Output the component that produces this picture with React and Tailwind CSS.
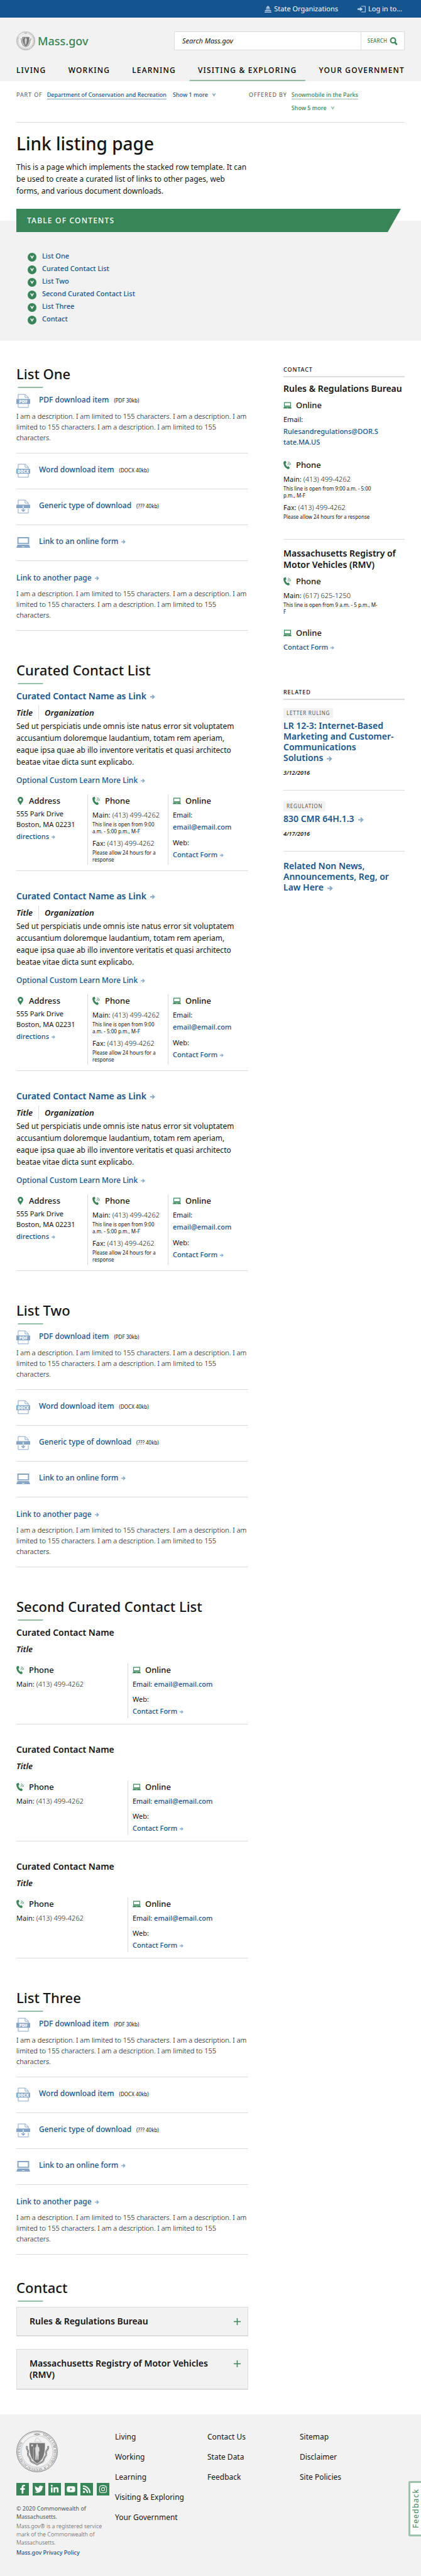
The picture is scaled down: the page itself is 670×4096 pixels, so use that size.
import React from "react";
import { FaFacebookF, FaTwitter, FaLinkedinIn, FaYoutube, FaRss, FaInstagram } from "react-icons/fa";

const LINK = "text-[#14558f] hover:underline";

function Arrow({ className = "ml-[5px] h-[7px] w-[7px]" }) {
  return (
    <svg viewBox="0 0 14 14" className={`inline-block text-[#89aac7] ${className}`} aria-hidden="true">
      <path d="M0 5.4h7.6L4.9 2.6 7 .6 13.6 7 7 13.4l-2.1-2 2.7-2.8H0z" fill="currentColor" />
    </svg>
  );
}

function Chevron({ className }) {
  return (
    <svg viewBox="0 0 12 12" className={className} aria-hidden="true">
      <path d="M0 1.4 2.8.6 6 5.2 9.2.6l2.8.8L6 11.6z" fill="currentColor" />
    </svg>
  );
}

function Laptop({ className }) {
  return (
    <svg viewBox="0 0 34 26" className={className} aria-hidden="true">
      <path fillRule="evenodd" fill="currentColor" d="M2.5 0h29v17h-29zM5.5 3v11h23V3z" />
      <path fillRule="evenodd" fill="currentColor" d="M2.8 18.5h28.4L34 26H0zM14 23.2v1.4h6v-1.4z" />
    </svg>
  );
}

function PhoneIcon({ className }) {
  return (
    <svg viewBox="0 0 22 24" className={className} aria-hidden="true">
      <path
        fill="currentColor"
        d="M3 .8 6 .1c.6 0 1 .2 1.2.7l1.3 4.4c.1.6 0 1-.5 1.3L5.9 8c.9 3.6 3 6.8 5.7 9l2.2-1.3c.5-.3 1-.2 1.4.2l3 3.4c.4.5.4 1 0 1.4l-2 2.4c-.5.6-1.2.9-2 .8C6.5 22.3.1 14 .1 4.8.1 2.7 1 1.3 3 .8z"
      />
      <path
        fill="none"
        stroke="currentColor"
        strokeWidth="1.7"
        d="M12.2 9.7c1.2.3 1.9 1.1 2 2.4M13 6.2c2.8.5 4.6 2.5 4.8 5.6M13.9 2.6c4.2.7 7 4 7.2 8.6"
      />
    </svg>
  );
}

function Pin({ className }) {
  return (
    <svg viewBox="0 0 14 20" className={className} aria-hidden="true">
      <path
        fillRule="evenodd"
        fill="currentColor"
        d="M7 0a7 7 0 0 1 7 7c0 4.500-4 8-7 13C4 15 0 11.500 0 7a7 7 0 0 1 7-7zm0 4.200a2.900 2.900 0 1 0 0 5.800 2.900 2.900 0 0 0 0-5.800z"
      />
    </svg>
  );
}

function FileIcon({ label }) {
  return (
    <svg viewBox="0 0 34 34" className="h-[23px] w-[22px]" aria-hidden="true">
      <g fill="none" stroke="#85a6c7" strokeWidth="1.5">
        <path d="M4.5 13V1h17.7l7.3 7v5M4.5 22v11h25V22" />
        <path d="M21.5 1v7.500h8" />
      </g>
      <rect x="0" y="12.3" width="34" height={label ? 12 : 8.5} fill="#85a6c7" />
      {label ? (
        <text
          x="17"
          y="21.8"
          textAnchor="middle"
          fill="#fff"
          fontFamily="'Noto Sans', sans-serif"
          fontWeight="900"
          fontSize={label === "PDF" ? 11 : 9.5}
        >
          {label}
        </text>
      ) : (
        <>
          <path d="M17 14.5v12" stroke="#fff" strokeWidth="2" />
          <path d="M17 21v7M12.5 24.500l4.500 4.200 4.500-4.200" fill="none" stroke="#85a6c7" strokeWidth="2.2" />
        </>
      )}
    </svg>
  );
}

function Seal({ className, id }) {
  return (
    <svg viewBox="0 0 100 100" className={className} role="img" aria-label="Massachusetts State Seal">
      <g fill="none" stroke="#787878">
        <circle cx="50" cy="50" r="49.2" strokeWidth="1.4" />
        <circle cx="50" cy="50" r="46.8" strokeWidth=".7" />
        <circle cx="50" cy="50" r="38" strokeWidth="1" strokeDasharray="1 .7" />
      </g>
      <defs>
        <path id={id} d="M55 9.8A40.5 40.5 0 1 1 45 9.8" />
      </defs>
      <text fontFamily="'Liberation Serif', serif" fontSize="9" fill="#787878">
        <textPath href={`#${id}`} startOffset="8">
          SIGILLUM REIPUBLICÆ MASSACHUSETTENSIS
        </textPath>
      </text>
      <path d="M41 8.5l7-1.500v3zM59 8.500l-7-1.500v3z" fill="#787878" />
      <circle cx="50" cy="8.5" r="2" fill="none" stroke="#787878" />
      <path
        d="M26 37c-3 9 5 10 2 18-1 6 5 8 6 15 1 6 9 7 16 11 7-4 15-5 16-11 1-7 7-9 6-15-3-8 8-9 4-18"
        fill="none"
        stroke="#858585"
        strokeWidth="4.5"
        strokeDasharray="3 .6"
      />
      <path d="M31 29h38.500c.5 24-2 40-19.500 50.500C33 69 30.500 53 31 29z" fill="#787878" stroke="#f2f2f2" />
      <path d="M44 27l4-9 4-1 2 3 6 7z" fill="none" stroke="#b5b5b5" strokeWidth=".9" />
      <path d="M38 32l.9 2.200 2.300.1-1.800 1.500.7 2.300-2.100-1.300-2 1.300.7-2.300-1.900-1.500 2.400-.1z" fill="#f2f2f2" />
      <path
        d="M48 34l2-2 2 2v4l3 2 .8 9-2 2 .2 6-1 13h-2l-1-14-1.500 14H46l.3-14-.6-8 .5-8 2-2z"
        fill="#dedede"
      />
      <path d="M42 39c-1.500 10-1 20 0 31M44 44l3-2" stroke="#dedede" strokeWidth=".9" fill="none" />
    </svg>
  );
}

function SectionTitle({ children, className = "mt-12" }) {
  return (
    <div className={className}>
      <h2 className="text-[22px] leading-7 font-medium">{children}</h2>
      <div className="mt-[7px] ml-[2px] h-[2px] w-[41px] bg-[#96bfa7] [clip-path:polygon(1px_0,100%_0,calc(100%-1px)_100%,0_100%)]" />
    </div>
  );
}

const DESCRIPTION =
  "I am a description. I am limited to 155 characters. I am a description. I am limited to 155 characters. I am a description. I am limited to 155 characters.";

function DownloadRow({ icon, title, size, arrow }) {
  return (
    <div className="flex items-start">
      <span className="flex h-[23px] w-[22px] shrink-0 items-center">{icon}</span>
      <a href="#download" className={`ml-[14px] text-[12px] leading-5 font-medium ${LINK}`}>
        {title}
        {arrow && <Arrow />}
      </a>
      {size && <span className="ml-[8px] text-[8px] leading-[22px]">{size}</span>}
    </div>
  );
}

function LinkList() {
  return (
    <ul className="mt-[9px] divide-y divide-[#dcdcdc] border-b border-[#dcdcdc]">
      <li className="pb-4">
        <DownloadRow icon={<FileIcon label="PDF" />} title="PDF download item" size="(PDF 30kb)" />
        <p className="mt-1 text-[11px] leading-[17px] font-light text-black">{DESCRIPTION}</p>
      </li>
      <li className="pt-4 pb-[17px]">
        <DownloadRow icon={<FileIcon label="DOCX" />} title="Word download item" size="(DOCX 40kb)" />
      </li>
      <li className="pt-4 pb-[17px]">
        <DownloadRow icon={<FileIcon />} title="Generic type of download" size="(??? 40kb)" />
      </li>
      <li className="pt-4 pb-[17px]">
        <DownloadRow icon={<Laptop className="h-[17px] w-[22px] text-[#85a6c7]" />} title="Link to an online form" arrow />
      </li>
      <li className="pt-[17px] pb-4">
        <a href="#page" className={`block text-[12px] leading-5 font-medium ${LINK}`}>
          Link to another page
          <Arrow />
        </a>
        <p className="mt-[6px] text-[11px] leading-[17px] font-light text-black">{DESCRIPTION}</p>
      </li>
    </ul>
  );
}

function GroupHeading({ icon, children }) {
  return (
    <h4 className="flex items-center gap-2 text-[13px] leading-[18px] font-medium">
      <span className="flex w-[12px] shrink-0 justify-center text-[#388557]">{icon}</span>
      {children}
    </h4>
  );
}

const phoneIcon = <PhoneIcon className="h-[13px] w-[12px]" />;
const laptopIcon = <Laptop className="h-[11px] w-[13px] shrink-0" />;

function PhoneLine({ label, number, note }) {
  return (
    <div className="mt-[5px]">
      <p className="text-[11px] leading-[17px] whitespace-nowrap">
        {label}:{" "}
        <a href="#call" className="font-light">
          {number}
        </a>
      </p>
      {note && <p className="mt-px text-[8px] leading-[11px]">{note}</p>}
    </div>
  );
}

function ContactForm({ className = "mt-[2px]" }) {
  return (
    <a href="#form" className={`block text-[11px] leading-[17px] font-medium ${LINK} ${className}`}>
      Contact Form
      <Arrow className="ml-[4px] h-[6px] w-[6px]" />
    </a>
  );
}

function CuratedLinked() {
  return (
    <article className="border-b border-[#dcdcdc] pb-[9px]">
      <h3 className="text-[14px] leading-5 font-semibold">
        <a href="#contact-page" className={LINK}>
          Curated Contact Name as Link
          <Arrow className="ml-[6px] h-[8px] w-[8px]" />
        </a>
      </h3>
      <p className="mt-[5px] flex text-[13px] leading-[22px] font-semibold italic">
        <span className="mr-[9px]">Title</span>
        <span className="border-l border-[#dcdcdc] pl-[9px]">Organization</span>
      </p>
      <p className="mt-px text-[12px] leading-[19px]">
        Sed ut perspiciatis unde omnis iste natus error sit voluptatem accusantium doloremque laudantium, totam rem
        aperiam, eaque ipsa quae ab illo inventore veritatis et quasi architecto beatae vitae dicta sunt explicabo.
      </p>
      <a href="#more" className={`mt-[10px] block text-[12px] leading-5 font-medium ${LINK}`}>
        Optional Custom Learn More Link
        <Arrow />
      </a>
      <div className="mt-3 grid grid-cols-[114px_128px_1fr] divide-x divide-[#dcdcdc]">
        <div className="pt-px">
          <GroupHeading icon={<Pin className="h-[13px] w-[9px]" />}>Address</GroupHeading>
          <p className="mt-[3px] text-[11px] leading-[17px]">
            555 Park Drive
            <br />
            Boston, MA 02231
          </p>
          <a href="#directions" className={`mt-[2px] block text-[11px] leading-[17px] font-medium ${LINK}`}>
            directions
            <Arrow className="ml-[4px] h-[6px] w-[6px]" />
          </a>
        </div>
        <div className="pt-px pr-[8px] pl-[7px]">
          <GroupHeading icon={phoneIcon}>Phone</GroupHeading>
          <PhoneLine label="Main" number="(413) 499-4262" note="This line is open from 9:00 a.m. - 5:00 p.m., M-F" />
          <PhoneLine label="Fax" number="(413) 499-4262" note="Please allow 24 hours for a response" />
        </div>
        <div className="pt-px pb-2 pl-[7px]">
          <GroupHeading icon={laptopIcon}>Online</GroupHeading>
          <p className="mt-[5px] text-[11px] leading-[17px]">Email:</p>
          <a href="#email" className={`mt-[2px] block text-[11px] leading-[17px] font-medium ${LINK}`}>
            email@email.com
          </a>
          <p className="mt-2 text-[11px] leading-[17px]">Web:</p>
          <ContactForm />
        </div>
      </div>
    </article>
  );
}

function CuratedPlain() {
  return (
    <article className="border-b border-[#dcdcdc] pb-[9px]">
      <h3 className="text-[14px] leading-5 font-semibold">Curated Contact Name</h3>
      <p className="mt-[5px] text-[13px] leading-[22px] font-semibold italic">Title</p>
      <div className="mt-3 grid grid-cols-[178px_1fr] divide-x divide-[#dcdcdc]">
        <div className="pt-px">
          <GroupHeading icon={phoneIcon}>Phone</GroupHeading>
          <PhoneLine label="Main" number="(413) 499-4262" />
        </div>
        <div className="pt-px pb-[3px] pl-[7px]">
          <GroupHeading icon={laptopIcon}>Online</GroupHeading>
          <p className="mt-[5px] text-[11px] leading-[17px]">
            Email:{" "}
            <a href="#email" className={`font-medium ${LINK}`}>
              email@email.com
            </a>
          </p>
          <p className="mt-[7px] text-[11px] leading-[17px]">Web:</p>
          <ContactForm />
        </div>
      </div>
    </article>
  );
}

function SideTitle({ children, className = "" }) {
  return (
    <h2 className={`border-b-2 border-[#dcdcdc] pb-1 text-[9px] leading-3 font-medium tracking-widest uppercase ${className}`}>
      {children}
    </h2>
  );
}

function RelatedItem({ tag, title, date, className }) {
  return (
    <li className={className}>
      {tag && (
        <span className="mb-[3px] block w-fit bg-[#f2f2f2] px-[5px] text-[8px] leading-4 tracking-widest text-[#535353] uppercase">
          {tag}
        </span>
      )}
      <a href="#related" className={`block max-w-[180px] text-[14px] leading-[17px] font-semibold ${LINK}`}>
        {title}
        <Arrow className="ml-[6px] h-[9px] w-[9px]" />
      </a>
      {date && <p className="mt-[10px] text-[9px] leading-3 font-semibold italic">{date}</p>}
    </li>
  );
}

function Sidebar() {
  return (
    <aside className="w-[193px] shrink-0 pt-[2px]">
      <SideTitle>Contact</SideTitle>
      <div className="mt-[9px] border-b border-[#dcdcdc] pb-[30px]">
        <h3 className="text-[14px] leading-[18px] font-semibold whitespace-nowrap">Rules &amp; Regulations Bureau</h3>
        <div className="mt-2 w-[153px]">
          <GroupHeading icon={laptopIcon}>Online</GroupHeading>
          <p className="mt-[5px] text-[11px] leading-[17px]">Email:</p>
          <a href="#email" className={`mt-[2px] block text-[11px] leading-[17px] font-medium break-all ${LINK}`}>
            Rulesandregulations@DOR.State.MA.US
          </a>
        </div>
        <div className="mt-[19px] w-[150px]">
          <GroupHeading icon={phoneIcon}>Phone</GroupHeading>
          <PhoneLine label="Main" number="(413) 499-4262" note="This line is open from 9:00 a.m. - 5:00 p.m., M-F" />
          <PhoneLine label="Fax" number="(413) 499-4262" note="Please allow 24 hours for a response" />
        </div>
      </div>
      <div className="mt-[13px]">
        <h3 className="text-[14px] leading-[18px] font-semibold">Massachusetts Registry of Motor Vehicles (RMV)</h3>
        <div className="mt-2 w-[150px]">
          <GroupHeading icon={phoneIcon}>Phone</GroupHeading>
          <PhoneLine label="Main" number="(617) 625-1250" note="This line is open from 9 a.m. - 5 p.m., M-F" />
        </div>
        <div className="mt-[19px]">
          <GroupHeading icon={laptopIcon}>Online</GroupHeading>
          <ContactForm className="mt-[5px]" />
        </div>
      </div>
      <SideTitle className="mt-[58px]">Related</SideTitle>
      <ul>
        <RelatedItem
          className="border-b border-[#dcdcdc] pt-[13px] pb-[21px]"
          tag="Letter Ruling"
          title="LR 12-3: Internet-Based Marketing and Customer-Communications Solutions"
          date="3/12/2016"
        />
        <RelatedItem
          className="border-b border-[#dcdcdc] pt-[17px] pb-[21px]"
          tag="Regulation"
          title="830 CMR 64H.1.3"
          date="4/17/2016"
        />
        <RelatedItem className="pt-[14px]" title="Related Non News, Announcements, Reg, or Law Here" />
      </ul>
    </aside>
  );
}

function Accordion({ title, className }) {
  return (
    <button
      type="button"
      aria-expanded="false"
      className={`flex w-full items-start justify-between border border-b-2 border-[#dcdcdc] bg-[#f2f2f2] py-[13px] pr-[11px] pl-[20px] text-left ${className}`}
    >
      <span className="text-[14px] leading-[18px] font-semibold">{title}</span>
      <svg viewBox="0 0 11 11" className="mt-1 ml-6 h-[11px] w-[11px] shrink-0" aria-hidden="true">
        <path d="M5.5 0v11M0 5.500h11" stroke="#388557" strokeWidth="1.5" />
      </svg>
    </button>
  );
}

const NAV = ["Living", "Working", "Learning", "Visiting & Exploring", "Your Government"];
const TOC = ["List One", "Curated Contact List", "List Two", "Second Curated Contact List", "List Three", "Contact"];
const FOOTER = [NAV, ["Contact Us", "State Data", "Feedback"], ["Sitemap", "Disclaimer", "Site Policies"]];
const SOCIAL = [
  ["Facebook", FaFacebookF],
  ["Twitter", FaTwitter],
  ["LinkedIn", FaLinkedinIn],
  ["YouTube", FaYoutube],
  ["RSS", FaRss],
  ["Instagram", FaInstagram],
];

function Header() {
  return (
    <header>
      <div className="flex h-7 items-center justify-end gap-[31px] bg-[#14558f] pr-[30px] text-[11px] text-white">
        <a href="#orgs" className="flex items-center gap-1">
          <svg viewBox="0 0 16 16" className="h-[11px] w-[11px] text-[#b9cee2]" aria-hidden="true">
            <path
              fill="currentColor"
              d="M7.5 0h1v1.600C10.800 2 12 3.600 12 5.400H4C4 3.600 5.200 2 7.500 1.600zM3.500 6h9v1.200h-9zM4 7.800h1.500v2H4zm2.300 0h1.300v2H6.300zm2.200 0h1.300v2H8.500zm2.200 0H12v2h-1.300zM1 10.300h14v1.200H1zM1 12h1.700v2H1zm3 0h1.700v2H4zm3.100 0h1.800v2H7.100zm3.200 0H12v2h-1.700zm3 0H15v2h-1.700zM0 14.500h16V16H0z"
            />
          </svg>
          State Organizations
        </a>
        <a href="#login" className="flex items-center gap-1">
          <svg viewBox="0 0 20 16" className="h-[11px] w-[13px] text-[#b9cee2]" aria-hidden="true">
            <path fill="currentColor" d="M0 6h6V2.500L13 8l-7 5.500V10H0z" />
            <path fill="none" stroke="currentColor" strokeWidth="1.7" d="M9 1h10v14H9" />
          </svg>
          Log in to...
        </a>
      </div>
      <div className="bg-[#f2f2f2] px-[26px] pt-[22px]">
        <div className="flex items-center justify-between">
          <a href="#home" className="flex items-center gap-1 text-[18px] leading-[30px] font-medium text-[#388557]">
            <Seal id="seal-header" className="h-[30px] w-[30px]" />
            Mass.gov
          </a>
          <form className="flex h-[30px] w-[367px] border border-[#dcdcdc] bg-white" onSubmit={(e) => e.preventDefault()}>
            <input
              type="search"
              aria-label="Search Mass.gov"
              placeholder="Search Mass.gov"
              className="min-w-0 flex-1 px-3 text-[11px] italic outline-none placeholder:text-[#141414]"
            />
            <button
              type="submit"
              className="flex w-[69px] items-center justify-center gap-1 border-l border-[#dcdcdc] text-[8px] font-medium tracking-wide text-[#388557]"
            >
              SEARCH
              <svg viewBox="0 0 20 20" className="h-[13px] w-[13px]" aria-hidden="true">
                <circle cx="8.5" cy="8" r="6" fill="none" stroke="currentColor" strokeWidth="3.2" />
                <path d="M12.5 12.500 18 18.500" stroke="currentColor" strokeWidth="4" />
              </svg>
            </button>
          </form>
        </div>
        <nav className="flex justify-between pt-6 text-[12px] leading-4 font-medium tracking-widest text-black uppercase">
          {NAV.map((item) => (
            <a key={item} href="#nav" className="relative pb-[9px]">
              {item}
              {item === "Visiting & Exploring" && (
                <span className="absolute -inset-x-[14px] bottom-0 h-[2px] bg-[#92bba3] [clip-path:polygon(1px_0,100%_0,calc(100%-1px)_100%,0_100%)]" />
              )}
            </a>
          ))}
        </nav>
      </div>
    </header>
  );
}

function Relationships() {
  return (
    <div className="mx-[26px] flex border-b border-[#dcdcdc] pt-[15px] pb-[15px] text-[9px] leading-[14px]">
      <div className="flex flex-1 items-start">
        <span className="mr-[7px] tracking-widest text-[#535353]">PART OF</span>
        <a href="#dept" className="border-b border-[#89aac7] leading-[13px] font-medium text-[#14558f]">
          Department of Conservation and Recreation
        </a>
        <button type="button" className="ml-[10px] flex items-center gap-[6px] font-medium text-[#14558f]">
          Show 1 more
          <Chevron className="h-[6px] w-[7px] text-[#89aac7]" />
        </button>
      </div>
      <div className="flex w-[248px] items-start">
        <span className="mr-[7px] tracking-widest text-[#535353]">OFFERED BY</span>
        <div>
          <a href="#park" className="block border-b border-[#9bc2ab] leading-[13px] font-medium text-[#388557]">
            Snowmobile in the Parks
          </a>
          <button type="button" className="mt-[7px] flex items-center gap-[6px] font-medium text-[#388557]">
            Show 5 more
            <Chevron className="h-[6px] w-[7px] text-[#9bc2ab]" />
          </button>
        </div>
      </div>
    </div>
  );
}

function Footer() {
  return (
    <footer className="relative flex bg-[#f2f2f2] px-[26px] pt-[26px] pb-[31px]">
      <div className="w-[157px] shrink-0">
        <Seal id="seal-footer" className="h-[66px] w-[66px]" />
        <ul className="mt-[17px] flex w-[148px] justify-between">
          {SOCIAL.map(([name, Icon]) => (
            <li key={name}>
              <a href="#social" aria-label={name} className="flex h-5 w-5 items-center justify-center bg-[#388557] text-white">
                <Icon className="h-[14px] w-[14px]" />
              </a>
            </li>
          ))}
        </ul>
        <p className="mt-[14px] w-[140px] text-[9px] leading-[13px] text-[#535353]">
          © 2020 Commonwealth of Massachusetts.
        </p>
        <p className="mt-[2px] w-[140px] text-[9px] leading-[13px] font-light text-[#535353]">
          Mass.gov® is a registered service mark of the Commonwealth of Massachusetts.
        </p>
        <a href="#privacy" className={`mt-[3px] block text-[9px] leading-[13px] font-medium ${LINK}`}>
          Mass.gov Privacy Policy
        </a>
      </div>
      <nav className="grid flex-1 grid-cols-3 pr-5">
        {FOOTER.map((col) => (
          <ul key={col[0]} className="flex flex-col gap-3 text-[12px] leading-5">
            {col.map((item) => (
              <li key={item}>
                <a href="#footer">{item}</a>
              </li>
            ))}
          </ul>
        ))}
      </nav>
      <button
        type="button"
        className="absolute top-[106px] right-0 flex h-[88px] w-[20px] items-center justify-center rounded-l-[3px] border-[3px] border-r-0 border-[#9bc2ab] bg-white text-[12px] leading-none tracking-widest text-[#388557]"
      >
        <span className="rotate-180 [writing-mode:vertical-rl]">Feedback</span>
      </button>
    </footer>
  );
}

export default function App() {
  return (
    <div className="bg-white font-['Noto_Sans',sans-serif] text-[#141414]">
      <Header />
      <Relationships />
      <div className="px-[26px] pt-[15px] pb-[19px]">
        <h1 className="text-[28px] leading-9 font-medium">Link listing page</h1>
        <p className="mt-[10px] max-w-[370px] text-[12px] leading-[19px]">
          This is a page which implements the stacked row template. It can be used to create a curated list of links to
          other pages, web forms, and various document downloads.
        </p>
      </div>
      <section className="bg-[linear-gradient(#fff_19px,#f2f2f2_19px)] px-[26px] pb-[25px]">
        <h2 className="mr-[6px] bg-[#388557] pl-[17px] text-[12px] leading-[37px] font-medium tracking-widest text-white uppercase [clip-path:polygon(0_0,100%_0,calc(100%-21px)_100%,0_100%)]">
          Table of Contents
        </h2>
        <ul className="mt-7 pl-[18px]">
          {TOC.map((item) => (
            <li key={item} className="flex h-5 items-center gap-[9px]">
              <span className="mt-[3px] flex h-[14px] w-[14px] items-center justify-center rounded-full bg-[#388557] text-white">
                <Chevron className="h-[6px] w-[6px]" />
              </span>
              <a href="#toc" className={`text-[11px] leading-5 font-medium ${LINK}`}>
                {item}
              </a>
            </li>
          ))}
        </ul>
      </section>
      <div className="flex gap-14 px-[26px] pt-[38px] pb-[39px]">
        <main className="min-w-0 flex-1">
          <SectionTitle className="">List One</SectionTitle>
          <LinkList />
          <SectionTitle>Curated Contact List</SectionTitle>
          <div className="mt-[9px] flex flex-col gap-[30px]">
            <CuratedLinked />
            <CuratedLinked />
            <CuratedLinked />
          </div>
          <SectionTitle>List Two</SectionTitle>
          <LinkList />
          <SectionTitle>Second Curated Contact List</SectionTitle>
          <div className="mt-[9px] flex flex-col gap-[30px]">
            <CuratedPlain />
            <CuratedPlain />
            <CuratedPlain />
          </div>
          <SectionTitle>List Three</SectionTitle>
          <LinkList />
          <SectionTitle className="mt-[38px]">Contact</SectionTitle>
          <Accordion title="Rules & Regulations Bureau" className="mt-2" />
          <Accordion title="Massachusetts Registry of Motor Vehicles (RMV)" className="mt-5" />
        </main>
        <Sidebar />
      </div>
      <Footer />
    </div>
  );
}
